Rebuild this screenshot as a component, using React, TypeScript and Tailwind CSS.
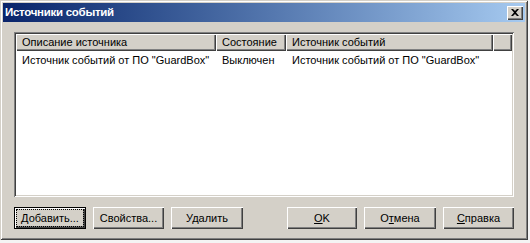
import React from "react";

const font = { fontFamily: '"Liberation Sans", Arial, sans-serif' };

function Btn({ children, def, w }: { children: React.ReactNode; def?: boolean; w: string }) {
  return (
    <button
      className={`${w} h-[22px] bg-[#d4d0c8] text-[11px] text-black flex items-center justify-center ${
        def
          ? "border border-black shadow-[inset_1px_1px_0_#fff,inset_-1px_-1px_0_#404040,inset_-2px_-2px_0_#808080]"
          : "shadow-[inset_1px_1px_0_#fff,inset_-1px_-1px_0_#404040,inset_-2px_-2px_0_#808080]"
      }`}
    >
      {def ? (
        <span className="px-1 outline outline-1 outline-dotted outline-black">{children}</span>
      ) : (
        children
      )}
    </button>
  );
}

export default function App() {
  return (
    <div className="w-[530px] h-[243px] bg-[#f4f4f4]" style={font}>
      <div className="w-[528px] h-[240px] bg-[#d4d0c8] flex flex-col shadow-[inset_1px_1px_0_#d4d0c8,inset_-1px_-1px_0_#404040,inset_2px_2px_0_#fff,inset_-2px_-2px_0_#808080] p-[3px]">
        <div className="h-[19px] flex items-center justify-between pl-[2px] pr-[2px] bg-gradient-to-r from-[#0a246a] to-[#a6caf0]">
          <span className="text-white text-[11.5px] font-bold tracking-tight">Источники событий</span>
          <div className="w-[16px] h-[14px] bg-[#d4d0c8] flex items-center justify-center shadow-[inset_1px_1px_0_#fff,inset_-1px_-1px_0_#404040,inset_-2px_-2px_0_#808080]">
            <svg width="8" height="7" viewBox="0 0 8 7">
              <path d="M0 0h2l2 2 2-2h2L5 3.5 8 7H6L4 5 2 7H0l3-3.5z" fill="#000" />
            </svg>
          </div>
        </div>

        <div className="mx-[11px] mt-[10px] h-[165px] bg-white shadow-[inset_1px_1px_0_#808080,inset_-1px_-1px_0_#fff,inset_2px_2px_0_#404040,inset_-2px_-2px_0_#d4d0c8] p-[2px] flex flex-col">
          <div className="flex h-[17px] text-[11px] text-black">
            {[
              ["w-[200px]", "Описание источника"],
              ["w-[70px]", "Состояние"],
              ["w-[207px]", "Источник событий"],
              ["flex-1", ""],
            ].map(([w, t], i) => (
              <div
                key={i}
                className={`${w} bg-[#d4d0c8] pl-[6px] flex items-center shadow-[inset_1px_1px_0_#fff,inset_-1px_-1px_0_#404040,inset_-2px_-2px_0_#808080]`}
              >
                {t}
              </div>
            ))}
          </div>
          <div className="flex h-[16px] items-center text-[11px] text-black mt-[1px]">
            <div className="w-[200px] pl-[6px]">Источник событий от ПО "GuardBox"</div>
            <div className="w-[70px] pl-[6px]">Выключен</div>
            <div className="w-[207px] pl-[6px]">Источник событий от ПО "GuardBox"</div>
          </div>
        </div>

        <div className="flex items-center mx-[11px] mt-[10px]">
          <div className="flex gap-[7px]">
            <Btn def w="w-[72px]">Добавить...</Btn>
            <Btn w="w-[71px]">Свойства...</Btn>
            <Btn w="w-[72px]">Удалить</Btn>
          </div>
          <div className="flex gap-[7px] ml-auto">
            <Btn w="w-[70px]"><span><u>O</u>K</span></Btn>
            <Btn w="w-[72px]"><span>О<u>т</u>мена</span></Btn>
            <Btn w="w-[71px]"><span><u>С</u>правка</span></Btn>
          </div>
        </div>
      </div>
    </div>
  );
}
